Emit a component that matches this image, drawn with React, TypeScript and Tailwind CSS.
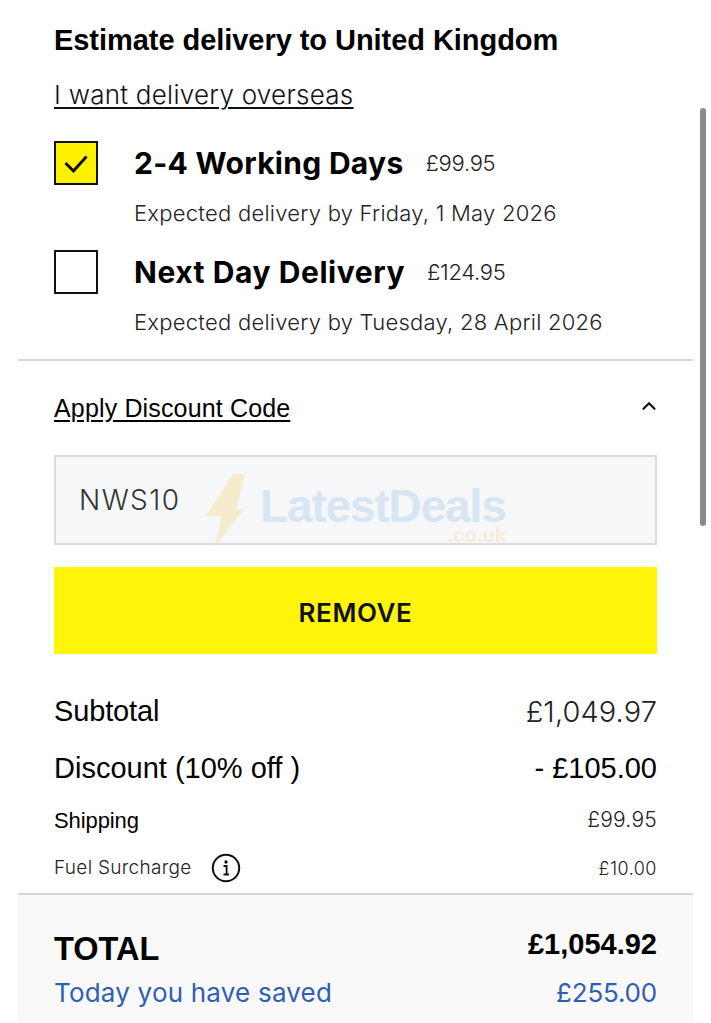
import { ChevronUp } from 'lucide-react';

const display = "font-['Inter',sans-serif]";
const arial = "font-['Liberation_Sans',Arial,sans-serif]";

function DeliveryOption({ title, price, note, checked, gap, titleClass }: { title: string; price: string; note: string; checked?: boolean; gap: string; titleClass: string }) {
  return (
    <div className={gap}>
      <div className="flex items-center h-[44px]">
        <div className={`w-[44px] h-[44px] border-2 border-[#111] flex items-center justify-center shrink-0 ${checked ? 'bg-[#fff200]' : 'bg-white'}`}>
          {checked && (
            <svg width="24" height="18" viewBox="0 0 24 18" fill="none" stroke="#111" strokeWidth="3" className="mt-[1px]">
              <path d="M1.5 8 L9.5 16 L22.5 1.5" />
            </svg>
          )}
        </div>
        <span className={`ml-[36px] text-[30px] font-bold text-black whitespace-nowrap ${titleClass}`}>{title}</span>
        <span className="ml-[22px] text-[22px] text-[#222] tracking-[-0.3px] font-light">{price}</span>
      </div>
      <p className="ml-[80px] mt-[15px] text-[22px] leading-[26px] text-[#222] font-light tracking-[0.25px] whitespace-nowrap">{note}</p>
    </div>
  );
}

function Row({ label, value, className, valueClass }: { label: React.ReactNode; value: string; className: string; valueClass?: string }) {
  return (
    <div className={`flex justify-between items-center ${className}`}>
      <div className="flex items-center">{label}</div>
      <span className={valueClass}>{value}</span>
    </div>
  );
}

export default function App() {
  return (
    <div className={`relative w-[711px] h-[1023px] overflow-hidden bg-white text-black ${display}`}>
      {/* scrollbar overlay */}
      <div className="absolute left-[700px] top-[108px] w-[6px] h-[418px] rounded-full bg-[#8b8b8b]" />

      <div className="px-[18px]">
        <section className="px-[36px] pt-[23px]">
          <h1 className={`${arial} text-[29px] leading-[34px] font-bold tracking-[-0.05px] whitespace-nowrap`}>Estimate delivery to United Kingdom</h1>
          <a className="block mt-[22px] text-[26px] leading-[32px] font-light underline underline-offset-[3px] decoration-[1.5px] tracking-[0.27px] text-[#111]">I want delivery overseas</a>
          <DeliveryOption gap="mt-[30px]" checked titleClass="tracking-[0.3px]" title="2-4 Working Days" price="£99.95" note="Expected delivery by Friday, 1 May 2026" />
          <DeliveryOption gap="mt-[24px]" titleClass="tracking-[0.55px]" title="Next Day Delivery" price="£124.95" note="Expected delivery by Tuesday, 28 April 2026" />
        </section>

        <div className="mt-[24px] border-t-2 border-[#d6d6d6]" />

        <section className="px-[36px]">
          <div className="flex justify-between items-center mt-[30px] h-[34px]">
            <span className={`${arial} text-[25px] leading-[34px] underline underline-offset-[3px] tracking-[0.15px]`}>Apply Discount Code</span>
            <ChevronUp size={22} strokeWidth={2.4} className="text-[#111] -mt-[4px] -mr-[3px]" />
          </div>

          <div className="mt-[30px] h-[90px] bg-[#f5f7f9] border-2 border-[#dcdcdc] flex items-center pl-[23px] text-[28px] font-light text-[#333] tracking-[1.4px]">
            NWS10
          </div>

          <button className="mt-[22px] w-full h-[87px] pt-[3px] bg-[#fff50a] text-[26px] font-semibold text-[#111] tracking-[0.6px] flex items-center justify-center">REMOVE</button>

          <div className="mt-[38px]">
            <Row className="h-[40px]" label={<span className={`${arial} text-[29px] tracking-[-0.15px]`}>Subtotal</span>} value="£1,049.97" valueClass="text-[29px] font-light tracking-[0.1px] text-[#222]" />
            <Row className="h-[40px] mt-[17px]" label={<span className={`${arial} text-[29px] tracking-[0px]`}>Discount (10% off )</span>} value="- £105.00" valueClass={`${arial} text-[29px]`} />
            <Row className="h-[30px] mt-[16px]" label={<span className={`${arial} text-[22px] tracking-[-0.1px]`}>Shipping</span>} value="£99.95" valueClass="text-[21px] font-light tracking-[0.25px] text-[#222]" />
            <Row
              className="h-[32px] mt-[17px]"
              label={
                <>
                  <span className="text-[19px] font-light tracking-[0.3px] text-[#222]">Fuel Surcharge</span>
                  <svg width="30" height="30" viewBox="0 0 30 30" fill="none" className="ml-[19px]">
                    <circle cx="15" cy="15" r="13.2" stroke="#111" strokeWidth="2" />
                    <circle cx="15" cy="9" r="1.7" fill="#111" />
                    <path d="M12.5 13 H15.6 V21 M12.5 21.5 H18" stroke="#111" strokeWidth="1.8" />
                  </svg>
                </>
              }
              value="£10.00"
              valueClass="text-[18px] font-light tracking-[0.5px] text-[#222]"
            />
          </div>
        </section>

        <section className="mt-[9px] border-t-2 border-[#d6d6d6] bg-[#f9f9f9] px-[36px] pt-[31px] h-[140px]">
          <div className="flex justify-between items-start h-[51px]">
            <span className={`${arial} text-[32.5px] leading-[46px] font-bold`}>TOTAL</span>
            <span className={`${arial} text-[29px] leading-[36px] font-bold`}>£1,054.92</span>
          </div>
          <div className="flex justify-between items-center text-[26px] leading-[32px] text-[#2f5fb5] tracking-[0.2px]">
            <span>Today you have saved</span>
            <span className="tracking-[-0.2px]">£255.00</span>
          </div>
        </section>
      </div>

      {/* LatestDeals watermark over the input */}
      <div className="absolute left-[205px] top-[472px] w-[305px] h-[76px] pointer-events-none">
        <svg width="42" height="76" viewBox="0 0 42 76" className="absolute left-0 top-0">
          <path d="M28 2 L40 2 L31 37 L39 37 L10 74 L17 44 L1 44 Z" fill="#f6e9c6" opacity="0.85" />
        </svg>
        <span className={`absolute left-[55px] top-[15px] ${arial} text-[46px] leading-[38px] font-bold tracking-[-1.15px] text-[#d7e6f2]`}>LatestDeals</span>
        <span className={`absolute left-[243px] top-[56px] ${arial} text-[20px] leading-[14px] font-bold text-[#f5edd5]`}>.co.uk</span>
      </div>
    </div>
  );
}
